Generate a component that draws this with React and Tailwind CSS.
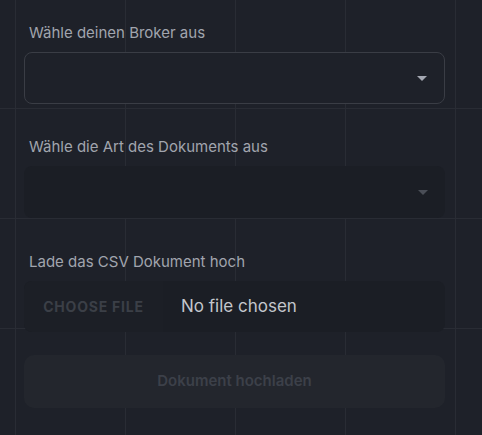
export default function App() {
  const font = { fontFamily: "Inter, 'Noto Sans', sans-serif" };
  return (
    <div
      style={font}
      className="w-full h-[435px] overflow-hidden bg-[#1e2129] [background-image:linear-gradient(to_right,#292c34_1px,transparent_1px),linear-gradient(to_bottom,#292c34_1px,transparent_1px)] [background-size:110px_110px] [background-position:15px_-2px]"
    >
      <div className="pl-[24px] pr-[37px] pt-[23px]">
        <label className="block pl-[5px] h-[20px] leading-[20px] text-[15px] text-[#a1a5ae]">
          Wähle deinen Broker aus
        </label>
        <div className="mt-[9px] h-[52px] rounded-[8px] border border-[#3a3d45] bg-[#1e2129] flex items-center justify-end pr-[17px]">
          <svg width="10" height="5" viewBox="0 0 10 5">
            <path d="M0 0H10L5 5Z" fill="#a4a8b2" />
          </svg>
        </div>

        <label className="block mt-[33px] pl-[5px] h-[20px] leading-[20px] text-[15px] text-[#a1a5ae]">
          Wähle die Art des Dokuments aus
        </label>
        <div className="mt-[9px] h-[52px] rounded-[8px] bg-[#1b1e25] flex items-center justify-end pr-[17px]">
          <svg width="10" height="5" viewBox="0 0 10 5">
            <path d="M0 0H10L5 5Z" fill="#4a4e57" />
          </svg>
        </div>

        <label className="block mt-[34px] pl-[5px] h-[20px] leading-[20px] text-[15px] text-[#a1a5ae]">
          Lade das CSV Dokument hoch
        </label>
        <div className="mt-[9px] h-[51px] rounded-[8px] bg-[#1b1e25] flex items-center overflow-hidden">
          <div className="h-full w-[139px] bg-[#1c1f26] flex items-center justify-center text-[14px] font-bold tracking-[0.8px] text-[#3b3f47]">
            CHOOSE FILE
          </div>
          <div className="pl-[18px] text-[17px] text-[#c3c6cc]">No file chosen</div>
        </div>

        <button className="mt-[23px] w-full h-[53px] rounded-[10px] bg-[#23262d] text-[15px] font-semibold text-[#3c4049]">
          Dokument hochladen
        </button>
      </div>
    </div>
  );
}
